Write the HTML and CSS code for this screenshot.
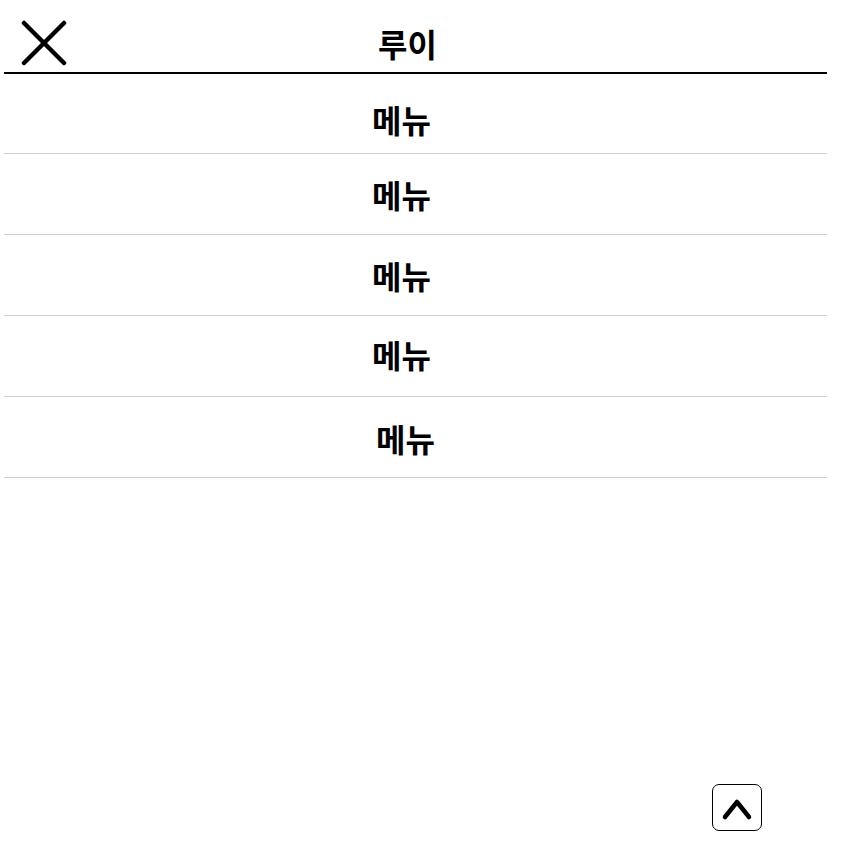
FILE: index.html
```html
<!DOCTYPE html>
<html lang="ko">
<head>
<meta charset="utf-8">
<title>루이</title>
<link rel="stylesheet" href="styles.css">
</head>
<body>
<div class="page">
  <header class="topbar">
    <button class="close" aria-label="닫기">
      <svg width="46" height="46" viewBox="0 0 46 46"><path d="M3 3 L43 43 M43 3 L3 43" stroke="#000" stroke-width="4.5" stroke-linecap="round" fill="none"/></svg>
    </button>
    <h1 class="title">루이</h1>
  </header>
  <nav class="menu">
    <a class="item item-1">메뉴</a>
    <a class="item item-2">메뉴</a>
    <a class="item item-3">메뉴</a>
    <a class="item item-4">메뉴</a>
    <a class="item item-5">메뉴</a>
  </nav>
</div>
<button class="to-top" aria-label="위로">
  <svg width="32" height="28" viewBox="0 0 32 28"><path d="M4 23 L16 8 L28 23" stroke="#000" stroke-width="4.5" stroke-linecap="round" stroke-linejoin="round" fill="none"/></svg>
</button>
</body>
</html>
```
FILE: styles.css
```css
html, body {
  margin: 0;
  padding: 0;
  background: #fff;
}
body {
  font-family: "Noto Sans CJK KR", "Noto Sans", sans-serif;
  color: #000;
}
.page {
  width: 823px;
  margin-left: 4px;
}
.topbar {
  height: 72px;
  border-bottom: 2px solid #000;
  display: flex;
  align-items: center;
  position: relative;
}
.close {
  position: absolute;
  left: 17px;
  top: 20px;
  padding: 0;
  border: 0;
  background: none;
  width: 46px;
  height: 46px;
}
.close svg { display: block; }
.title {
  flex: 1;
  margin: 0;
  text-align: center;
  font-size: 32px;
  font-weight: 700;
  line-height: 1;
  padding-top: 14px;
  padding-right: 16px;
}
.menu {
  display: flex;
  flex-direction: column;
}
.item {
  height: 81px;
  box-sizing: border-box;
  border-bottom: 1px solid #d0d0d0;
  display: flex;
  align-items: center;
  justify-content: center;
  font-size: 32px;
  font-weight: 700;
  line-height: 1;
  padding-right: 28px;
}
.item-1 { height: 80px; padding-top: 10px; }
.item-5 { padding-right: 20px; padding-top: 2px; }
.item-4 { padding-bottom: 4px; }
.to-top {
  position: fixed;
  right: 83px;
  bottom: 18px;
  width: 50px;
  height: 47px;
  border: 1px solid #000;
  border-radius: 7px;
  background: #fff;
  padding: 0;
  display: flex;
  align-items: center;
  justify-content: center;
  box-sizing: border-box;
}
.to-top svg { display: block; margin-top: 0; }
```
